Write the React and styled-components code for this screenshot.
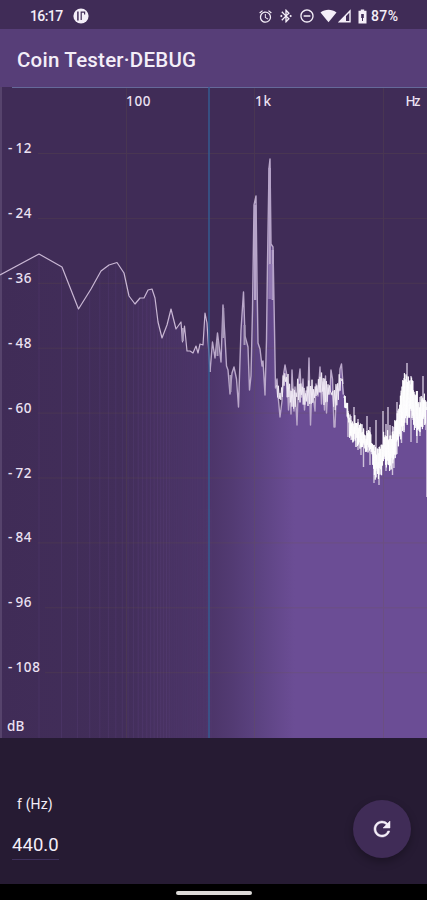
import React from 'react';
import styled, { createGlobalStyle } from 'styled-components';
import { MdAlarm, MdBluetoothConnected, MdRefresh, MdRemoveCircleOutline } from 'react-icons/md';

const GlobalStyle = createGlobalStyle`
    body {
        margin: 0;
        background: #000;
    }

    * {
        box-sizing: border-box;
    }
`;

const Screen = styled.div`
    display: flex;
    flex-direction: column;
    width: 427px;
    height: 900px;
    overflow: hidden;
    color: #f4eef8;
    font-family: Roboto, sans-serif;
`;

const StatusBar = styled.header`
    display: flex;
    align-items: center;
    justify-content: space-between;
    height: 29px;
    padding: 3px 29px 0 30px;
    background: #402c57;
    font-size: 14px;
    font-weight: 500;

    svg {
        display: block;
        flex: none;
    }
`;

const StatusGroup = styled.div`
    display: flex;
    align-items: center;
`;

const Clock = styled.span`
    width: 43px;
    font-size: 14px;
    letter-spacing: -0.6px;
`;

const StatusIcon = styled.span`
    display: flex;
    margin-right: ${props => props.$gap}px;
`;

const Battery = styled.span`
    letter-spacing: 0.4px;
    margin-right: -0.4px;
`;

const AppBar = styled.div`
    display: flex;
    align-items: center;
    height: 58px;
    padding: 3px 17px 0;
    background: #573e78;
`;

const Title = styled.h1`
    margin: 0;
    font-size: 20.5px;
    font-weight: 500;
    letter-spacing: 0.22px;
    white-space: nowrap;
`;

const Spectrum = styled.svg`
    display: block;
    flex: none;
    background: #402c57;
`;

const AxisLabel = styled.text`
    fill: #ece2f3;
    font-family: "Noto Sans", sans-serif;
    font-size: 13.5px;
    font-weight: 500;
`;

const Controls = styled.section`
    display: flex;
    justify-content: space-between;
    height: 146px;
    padding: 57px 16px 0 12px;
    background: #261b33;
`;

const Field = styled.label`
    display: flex;
    flex-direction: column;
    align-items: flex-start;
`;

const FieldName = styled.span`
    padding-left: 5px;
    font-size: 14px;
    line-height: 18px;
    letter-spacing: 0.15px;
`;

const FieldValue = styled.span`
    height: 33px;
    margin-top: 14px;
    border-bottom: 1px solid #3f315c;
    font-size: 18.5px;
    line-height: 36px;
    letter-spacing: 0.05px;
`;

const RefreshButton = styled.button`
    display: flex;
    align-items: center;
    justify-content: center;
    width: 58px;
    height: 58px;
    margin-top: 5px;
    padding: 0;
    border: 0;
    border-radius: 50%;
    color: #f4eef8;
    background: #402c57;
    box-shadow: 0 4px 8px rgba(0, 0, 0, 0.28);

    path:last-child {
        stroke: currentColor;
        stroke-width: 0.5px;
    }
`;

const SystemNav = styled.div`
    display: flex;
    justify-content: center;
    height: 16px;
    padding-top: 7px;
    background: #000;
`;

const HomePill = styled.div`
    width: 76px;
    height: 4px;
    border-radius: 2px;
    background: #dcdad8;
`;

const TOP = 87;
const BOTTOM = 738;

const spectrum = [
    [0, 275], [39, 254], [62, 267], [78.5, 309], [91, 289], [101, 271], [109, 265],
    [117, 262.5], [124, 273], [129, 296], [135, 304], [140, 298], [144, 298], [148, 290],
    [152, 289], [155, 298], [158, 322], [162, 338], [167, 325], [171, 309], [176, 329],
    [181, 322], [182.5, 342], [184.5, 326], [187, 351], [190, 351], [193, 353], [196, 346],
    [198, 353], [200, 344], [203, 345], [205, 313], [207, 323], [210, 372], [212.5, 342],
    [215, 358], [217.5, 333], [221, 362], [223, 305], [225, 338], [226.5, 366], [228, 370],
    [230, 394], [232, 373], [234, 367], [236.5, 379], [238.5, 407], [241, 330], [243.5, 292],
    [245, 336], [248, 347], [249.5, 390], [251, 376], [252.5, 310], [254, 205], [256, 196],
    [257, 280], [258, 343], [260, 349], [262, 366], [263, 361], [265, 395], [266.5, 340],
    [267.5, 263], [269, 168], [270, 159], [271, 244], [273, 247], [274.5, 330], [275.5, 388],
    [277, 379], [278, 395], [280, 417], [282, 401], [283, 378], [285, 365], [287, 376],
    [288.5, 410], [290, 391], [291, 414], [292, 370], [294, 411], [295, 387], [297, 425],
    [298.5, 382], [300, 369], [301.5, 397], [303, 379], [304.5, 410], [306, 391], [308, 392],
    [309, 358], [310.5, 425], [312, 386], [315, 411], [316, 384], [318, 396], [320, 367],
    [321.5, 404], [323, 382], [324.5, 410], [325.5, 376], [326.5, 413], [328, 388],
    [330, 394], [331, 370], [332.5, 379], [334, 427], [335, 427], [336.5, 387], [339, 391],
    [340, 369], [341.5, 364], [343, 384],
];

// [x, upper edge, lower edge] where the bins are closer together than a pixel
const band = [
    [276, 376, 390], [281, 388, 408], [285, 368, 388], [291, 385, 407], [296, 384, 407],
    [300, 378, 400], [305, 388, 409], [310, 377, 408], [315, 388, 405], [320, 370, 388],
    [325, 381, 407], [330, 386, 396], [335, 387, 412], [341, 370, 386], [345, 391, 407],
    [350, 417, 438], [355, 418, 443], [360, 422, 451], [365, 432, 450], [370, 432, 451],
    [375, 448, 477], [380, 445, 477], [385, 430, 463], [390, 436, 471], [395, 419, 456],
    [400, 395, 438], [405, 373, 428], [410, 376, 414], [415, 386, 433], [420, 401, 435],
    [424, 391, 423], [427, 405, 432],
];

const spikes = [
    [348, 437, 411], [351, 440, 416], [354, 439, 407], [358, 450, 419], [361, 455, 424],
    [363.5, 467, 430], [367, 450, 416], [370, 465, 427], [374, 483, 445], [376, 471, 420],
    [379, 485, 447], [383, 461, 411], [386, 471, 424], [388, 461, 407], [390, 470, 425],
    [392.5, 475, 426], [394, 468, 427], [397, 454, 402], [401.5, 443, 393], [404, 430, 378],
    [407, 423, 363], [411, 442, 376], [413, 420, 381], [417, 443, 391], [420, 436, 397],
    [423, 427, 376], [426, 430, 402],
];

const edgesAt = x => {
    const i = Math.max(1, band.findIndex(b => b[0] >= x));
    const [x0, t0, b0] = band[i - 1];
    const [x1, t1, b1] = band[i];
    const k = (x - x0) / (x1 - x0);
    return [t0 + (t1 - t0) * k, b0 + (b1 - b0) * k];
};

const zigzag = (from, to, step, spread) => {
    const points = [];
    let seed = 29;
    for (let x = from, i = 0; x <= to; x += step, i++) {
        seed = (seed * 1103 + 4721) % 65536;
        const jitter = seed / 65536;
        const [top, bottom] = edgesAt(x);
        points.push([x, i % 2 ? top + jitter * spread - 3 : bottom - jitter * spread + 3]);
    }
    return points;
};

const sparse = zigzag(276, 344, 0.8, 12);
const dense = zigzag(344, 426.8, 0.4, 12);
const toPath = points => points.map(p => p.map(n => n.toFixed(1)).join(' ')).join(' L');
const middle = band.filter(b => b[0] > 343).map(([x, top, bottom]) => [x, (top + bottom) / 2]);

const areaPath = `M0 ${BOTTOM} L${toPath(spectrum)} L${toPath(middle)} L427 ${BOTTOM}Z`;
const decibels = [-12, -24, -36, -48, -60, -72, -84, -96, -108];
const bins = Array.from({ length: 44 }, (_, i) => 39 + 127.5 * Math.log10((i + 2) / 2));

// every character sits in a cell of the same width
const cells = (x, text) => String(text).split('').map((c, i) => (x + i * 8.4 + (c === '-' ? 1 : 0)).toFixed(1)).join(' ');

const Label = ({ x, y, children }) => (
    <AxisLabel x={cells(x, children)} y={y}>{children}</AxisLabel>
);

const SpectrumChart = () => (
    <Spectrum width="427" height={BOTTOM - TOP} viewBox={`0 ${TOP} 427 ${BOTTOM - TOP}`}>
        <defs>
            <linearGradient id="area" gradientUnits="userSpaceOnUse" x1="0" x2="427" y1="0" y2="0">
                <stop offset="0" stopColor="#402c57" />
                <stop offset="0.29" stopColor="#422e5a" />
                <stop offset="0.38" stopColor="#483262" />
                <stop offset="0.48" stopColor="#4b3467" />
                <stop offset="0.54" stopColor="#523a72" />
                <stop offset="0.6" stopColor="#5b4280" />
                <stop offset="0.655" stopColor="#65498d" />
                <stop offset="0.69" stopColor="#6b4d95" />
                <stop offset="1" stopColor="#6b4d95" />
            </linearGradient>
            <clipPath id="under">
                <path d={areaPath} />
            </clipPath>
        </defs>
        <path d={areaPath} fill="url(#area)" />
        <g clipPath="url(#under)" stroke="#71519a" strokeWidth="1">
            {bins.map((x, i) => (
                <path key={x} d={`M${x.toFixed(1)} ${TOP}V${BOTTOM}`} opacity={i < 20 ? 0.17 : 0.06} />
            ))}
        </g>
        <g stroke="#6b5943" strokeWidth="1" opacity="0.22">
            {decibels.map((db, i) => (
                <path key={db} d={`M${i > 6 ? 45 : 38} ${153.5 + i * 64.9}H427`} />
            ))}
            <path d={`M126.5 ${TOP}V${BOTTOM}M254.5 ${TOP}V${BOTTOM}M383.5 ${TOP}V${BOTTOM}`} />
        </g>
        <path d={`M0 ${TOP}h2V${BOTTOM}h-2z`} fill="#56436c" />
        <path d={`M12 ${TOP + 0.5}H427`} stroke="#65699a" />
        <g fill="none" strokeLinejoin="round">
            <path d={`M${toPath(spectrum.slice(0, 34))}`} stroke="#c9b7d4" strokeWidth="1.2" />
            <path d={`M${toPath(spectrum.slice(33))}`} stroke="#baa8ca" strokeWidth="1.4" />
            <path d="M182.8 328V341M223.3 308V338M244.5 325V345M217.5 340V356M230.5 375V392" stroke="#a898b8" strokeWidth="2" />
            <path d="M255.2 205V300M269.7 168V265M272.8 250V300" stroke="#b6a3c9" strokeWidth="2.4" />
            <path d="M270.3 264V299" stroke="#8f76b0" strokeWidth="4" />
            <path d={`M${toPath(sparse)}`} stroke="#efe8f4" strokeWidth="1" />
            <path d={spikes.map(([x, low, high]) => `M${x} ${low}V${high}`).join('')} stroke="#cfc2db" strokeWidth="1.4" />
            <path d={`M${toPath(dense)}`} stroke="#fff" strokeWidth="0.9" />
            <path d="M426.5 410V497" stroke="#c5b3d6" />
        </g>
        <path d={`M209 ${TOP}V${BOTTOM}`} stroke="#345f94" strokeWidth="1.4" />
        <Label x={126} y={105.5}>100</Label>
        <Label x={255} y={105.5}>1k</Label>
        <Label x={405.5} y={105.5}>Hz</Label>
        {decibels.map((db, i) => (
            <Label key={db} x={7} y={153 + i * 64.9}>{db}</Label>
        ))}
        <Label x={7} y={731}>dB</Label>
    </Spectrum>
);

const App = () => (
    <Screen>
        <GlobalStyle />
        <StatusBar>
            <StatusGroup>
                <Clock>16:17</Clock>
                <svg width="16" height="16" viewBox="0 0 16 16">
                    <circle cx="8" cy="8" r="7.6" fill="#f4eef8" />
                    <path d="M4.9 3.5v9" stroke="#402c57" strokeWidth="1.5" />
                    <path d="M8.2 12V4.2h3.4v2.4" fill="none" stroke="#402c57" strokeWidth="1.2" />
                </svg>
            </StatusGroup>
            <StatusGroup>
                <StatusIcon $gap={5}><MdAlarm size={15} /></StatusIcon>
                <StatusIcon $gap={5}><MdBluetoothConnected size={16} /></StatusIcon>
                <StatusIcon $gap={5}><MdRemoveCircleOutline size={16} /></StatusIcon>
                <StatusIcon $gap={1}>
                    <svg width="17" height="14" viewBox="0 0 17 14">
                        <path d="M0.5 3.5C5-0.3 12-0.3 16.5 3.5L8.5 13.3z" fill="currentColor" />
                    </svg>
                </StatusIcon>
                <StatusIcon $gap={6.5}>
                    <svg width="13" height="14" viewBox="0 0 13 14">
                        <path d="M12 2V12.7H1.5z" fill="none" stroke="currentColor" strokeWidth="1.4" />
                        <path d="M8 6V13H1z" fill="currentColor" />
                    </svg>
                </StatusIcon>
                <StatusIcon $gap={4}>
                    <svg width="9" height="15" viewBox="0 0 9 15">
                        <path d="M2.8 0.5h3.4v1.3h2.3v12.7h-8V1.8h2.3z" fill="currentColor" />
                        <path d="M3.2 5h2.6v4H3.2zM4 9h1v3H4z" fill="#402c57" />
                    </svg>
                </StatusIcon>
                <Battery>87%</Battery>
            </StatusGroup>
        </StatusBar>
        <AppBar>
            <Title>Coin Tester·DEBUG</Title>
        </AppBar>
        <SpectrumChart />
        <Controls>
            <Field>
                <FieldName>f (Hz)</FieldName>
                <FieldValue>440.0</FieldValue>
            </Field>
            <RefreshButton aria-label="Refresh">
                <MdRefresh size={24} />
            </RefreshButton>
        </Controls>
        <SystemNav>
            <HomePill />
        </SystemNav>
    </Screen>
);

export default App;
